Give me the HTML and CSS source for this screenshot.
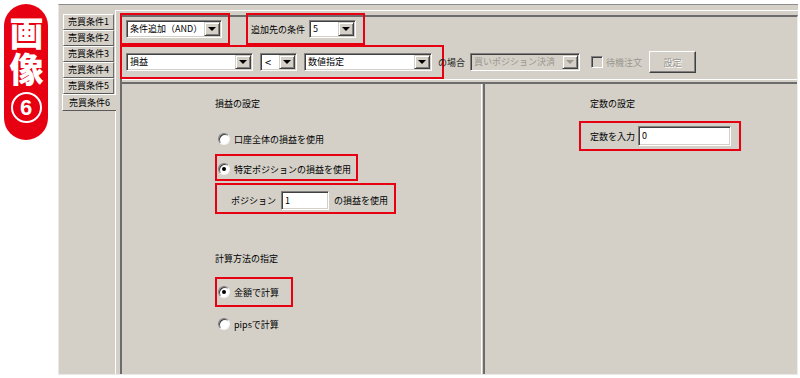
FILE: index.html
```html
<!DOCTYPE html>
<html lang="ja">
<head>
<meta charset="utf-8">
<title>売買条件</title>
<link rel="stylesheet" href="styles.css">
</head>
<body>
<div class="page">
  <div class="badge">
    <span class="badge-text">画像</span>
    <span class="badge-num">6</span>
  </div>
  <div class="window">
    <div class="tabs">
      <div class="tab">売買条件1</div>
      <div class="tab">売買条件2</div>
      <div class="tab">売買条件3</div>
      <div class="tab">売買条件4</div>
      <div class="tab">売買条件5</div>
      <div class="tab active">売買条件6</div>
    </div>
    <div class="tabpage">
      <div class="sunken">
        <div class="controls">
          <div class="row row1">
            <div class="hl hl-a">
              <div class="combo w-and"><span class="val">条件追加（AND）</span><span class="drop"><i></i></span></div>
            </div>
            <div class="hl hl-b">
              <span class="lbl">追加先の条件</span>
              <div class="combo w-five"><span class="val">5</span><span class="drop"><i></i></span></div>
            </div>
          </div>
          <div class="row row2">
            <div class="hl hl-c">
              <div class="combo w-pl"><span class="val">損益</span><span class="drop"><i></i></span></div>
              <div class="combo w-op"><span class="val op">&lt;</span><span class="drop"><i></i></span></div>
              <div class="combo w-num"><span class="val">数値指定</span><span class="drop"><i></i></span></div>
            </div>
            <span class="lbl case">の場合</span>
            <div class="combo disabled w-pos"><span class="val">買いポジション決済</span><span class="drop"><i></i></span></div>
            <span class="check"></span>
            <span class="lbl dis">待機注文</span>
            <button class="btn" disabled>設定</button>
          </div>
        </div>
        <div class="panels">
          <div class="panel panel-left">
            <div class="heading">損益の設定</div>
            <div class="opt opt-1"><span class="radio"></span><span>口座全体の損益を使用</span></div>
            <div class="hl hl-d">
              <div class="opt"><span class="radio on"></span><span>特定ポジションの損益を使用</span></div>
            </div>
            <div class="hl hl-e">
              <span class="lbl pos-lbl">ポジション</span>
              <div class="field w-posn">1</div>
              <span class="lbl pos-tail">の損益を使用</span>
            </div>
            <div class="heading heading-2">計算方法の指定</div>
            <div class="hl hl-f">
              <div class="opt"><span class="radio on"></span><span>金額で計算</span></div>
            </div>
            <div class="opt opt-4"><span class="radio"></span><span>pipsで計算</span></div>
          </div>
          <div class="panel panel-right">
            <div class="heading heading-r">定数の設定</div>
            <div class="hl hl-g">
              <span class="lbl">定数を入力</span>
              <div class="field w-const">0</div>
            </div>
          </div>
        </div>
      </div>
    </div>
  </div>
</div>
</body>
</html>
```
FILE: styles.css
```css
html, body {
  margin: 0;
  padding: 0;
}
body {
  width: 800px;
  height: 378px;
  overflow: hidden;
  background: #ffffff;
  font-family: "Noto Sans CJK JP", "Noto Sans", sans-serif;
  font-size: 9px;
  color: #000;
}
.page {
  display: flex;
  align-items: flex-start;
  padding: 4px 0 0 4px;
}

/* badge */
.badge {
  width: 44px;
  height: 136px;
  box-sizing: border-box;
  border-radius: 22px;
  background: #e60012;
  color: #fff;
  display: flex;
  flex-direction: column;
  align-items: center;
  padding-top: 12px;
}
.badge-text {
  writing-mode: vertical-rl;
  font-size: 34px;
  font-weight: 900;
  line-height: 1;
  letter-spacing: 2px;
}
.badge-num {
  margin-top: 4px;
  width: 31px;
  height: 31px;
  box-sizing: border-box;
  border: 2px solid #fff;
  border-radius: 50%;
  display: flex;
  align-items: center;
  justify-content: center;
  font-family: "Liberation Sans", sans-serif;
  font-weight: 700;
  font-size: 22px;
  line-height: 1;
}

/* window */
.window {
  margin-left: 10px;
  width: 740px;
  height: 371px;
  box-sizing: border-box;
  background: #d4d0c8;
  border-top: 1px solid #8c8c8c;
  border-left: 1px solid #ebe9e5;
  border-bottom: 1px solid #ebe9e5;
  display: flex;
}
.tabs {
  width: 56px;
  flex: none;
  box-sizing: border-box;
  padding: 9px 0 0 4px;
  display: flex;
  flex-direction: column;
}
.tab {
  width: 51px;
  height: 16px;
  box-sizing: border-box;
  border: 1px solid;
  border-color: #ffffff #6e6e6e #5a5a5a #ffffff;
  text-align: center;
  line-height: 14px;
  white-space: nowrap;
  font-size: 9px;
}
.tab.active {
  margin-left: -1px;
  width: 54px;
  height: 17px;
  border-right: none;
  background: #d4d0c8;
  position: relative;
  z-index: 1;
  margin-right: -1px;
  line-height: 15px;
}
.tabpage {
  flex: 1;
  margin-top: 5px;
  border-top: 1px solid #ffffff;
  border-left: 1px solid #ffffff;
  padding: 4px 0 0 4px;
  display: flex;
  flex-direction: column;
}
.sunken {
  flex: 1;
  border-top: 2px solid #6c6c6c;
  border-left: 2px solid #6c6c6c;
  border-right: 1px solid #efeeea;
  display: flex;
  flex-direction: column;
}
.controls {
  height: 63px;
  box-sizing: border-box;
  border-bottom: 1px solid #ffffff;
  margin-bottom: 2px;
}
.row {
  display: flex;
  align-items: center;
  margin-left: -2px;
}
.row1 {
  margin-top: -4px;
  height: 32px;
}
.row2 {
  height: 34px;
}

/* highlight frames */
.hl {
  border: 2px solid #e60012;
  box-sizing: border-box;
  display: flex;
  align-items: center;
  flex: none;
}
.hl-a {
  width: 110px;
  height: 32px;
  padding-left: 4px;
}
.hl-b {
  margin-left: 16px;
  width: 119px;
  height: 32px;
  padding: 0 7px 0 3px;
}
.hl-b .combo {
  margin-left: auto;
}
.hl-c {
  width: 324px;
  height: 34px;
  padding-left: 4px;
}

/* controls */
.lbl {
  white-space: nowrap;
  flex: none;
}
.combo {
  height: 18px;
  box-sizing: border-box;
  background: #ffffff;
  border: 1px solid;
  border-color: #808080 #ffffff #ffffff #808080;
  box-shadow: inset 1px 1px #404040, inset -1px -1px #d4d0c8;
  display: flex;
  align-items: stretch;
  padding: 1px;
  flex: none;
}
.combo .val {
  flex: 1;
  padding-left: 2px;
  line-height: 14px;
  white-space: nowrap;
  overflow: hidden;
}
.combo .val.op {
  font-size: 11px;
  padding-left: 3px;
}
.drop {
  width: 16px;
  flex: none;
  box-sizing: border-box;
  background: #d4d0c8;
  border: 1px solid;
  border-color: #d4d0c8 #404040 #404040 #d4d0c8;
  box-shadow: inset 1px 1px #ffffff, inset -1px -1px #808080;
  display: flex;
  align-items: center;
  justify-content: center;
}
.drop i {
  width: 0;
  height: 0;
  border-left: 4px solid transparent;
  border-right: 4px solid transparent;
  border-top: 4px solid #000;
}
.w-and { width: 96px; }
.w-five { width: 47px; }
.w-pl { width: 127px; }
.w-op { width: 37px; margin-left: 7px; }
.w-num { width: 128px; margin-left: 7px; }
.case {
  margin-left: -6px;
  width: 32px;
  color: #222;
}
.w-pos { width: 110px; }
.combo.disabled {
  background: #d4d0c8;
  color: #9a978f;
}
.combo.disabled .drop i {
  border-top-color: #9a978f;
}
.check {
  margin-left: 11px;
  width: 12px;
  height: 12px;
  box-sizing: border-box;
  background: #d4d0c8;
  border: 1px solid;
  border-color: #808080 #ffffff #ffffff #808080;
  box-shadow: inset 1px 1px #404040;
  flex: none;
}
.dis {
  margin-left: 3px;
  width: 40px;
  color: #9a978f;
}
.btn {
  margin-left: 3px;
  width: 47px;
  height: 22px;
  box-sizing: border-box;
  background: #d4d0c8;
  border: 1px solid;
  border-color: #ffffff #404040 #404040 #ffffff;
  box-shadow: inset -1px -1px #808080;
  font-family: inherit;
  font-size: 9px;
  color: #9a978f;
  text-shadow: 1px 1px #ffffff;
  padding: 0;
  flex: none;
}

/* panels */
.panels {
  flex: 1;
  display: flex;
  border-top: 2px solid #6c6c6c;
}
.panel {
  display: flex;
  flex-direction: column;
  align-items: flex-start;
}
.panel-left {
  width: 360px;
  box-sizing: border-box;
  border-right: 1px solid #ffffff;
  padding-left: 93px;
}
.panel-right {
  flex: 1;
  margin-left: 1px;
  border-left: 2px solid #6c6c6c;
  padding-left: 94px;
}
.heading {
  margin-top: 14px;
  line-height: 12px;
  white-space: nowrap;
}
.heading-2 {
  margin-top: 39px;
}
.heading-r {
  margin-left: 11px;
}
.opt {
  height: 18px;
  display: flex;
  align-items: center;
  gap: 4px;
  padding-left: 3px;
  white-space: nowrap;
}
.hl .opt {
  padding-left: 1px;
}
.opt-1 {
  margin-top: 20px;
}
.opt-4 {
  margin-top: 8px;
}
.radio {
  width: 12px;
  height: 12px;
  box-sizing: border-box;
  border-radius: 50%;
  background: #ffffff;
  border: 1px solid;
  border-color: #808080 #f4f4f4 #f4f4f4 #808080;
  box-shadow: inset 1px 1px #404040;
  display: flex;
  align-items: center;
  justify-content: center;
  flex: none;
}
.radio.on::after {
  content: "";
  width: 4px;
  height: 4px;
  border-radius: 50%;
  background: #000;
}
.hl-d {
  margin-top: 6px;
  width: 143px;
  height: 27px;
  padding: 4px 0 1px 0;
  align-items: flex-start;
}
.hl-e {
  margin-top: 2px;
  width: 181px;
  height: 31px;
  padding: 4px 0 0 14px;
}
.pos-lbl {
  width: 50px;
}
.pos-tail {
  margin-left: 5px;
}
.field {
  height: 19px;
  box-sizing: border-box;
  background: #ffffff;
  border: 1px solid;
  border-color: #808080 #ffffff #ffffff #808080;
  box-shadow: inset 1px 1px #404040, inset -1px -1px #d4d0c8;
  padding: 1px 3px;
  line-height: 15px;
  flex: none;
}
.w-posn { width: 48px; }
.hl-f {
  margin-top: 12px;
  width: 78px;
  height: 30px;
}
.hl-g {
  margin-top: 11px;
  width: 162px;
  height: 30px;
  padding: 0 8px 0 9px;
}
.w-const {
  width: 93px;
  height: 20px;
  margin-left: auto;
}
```
